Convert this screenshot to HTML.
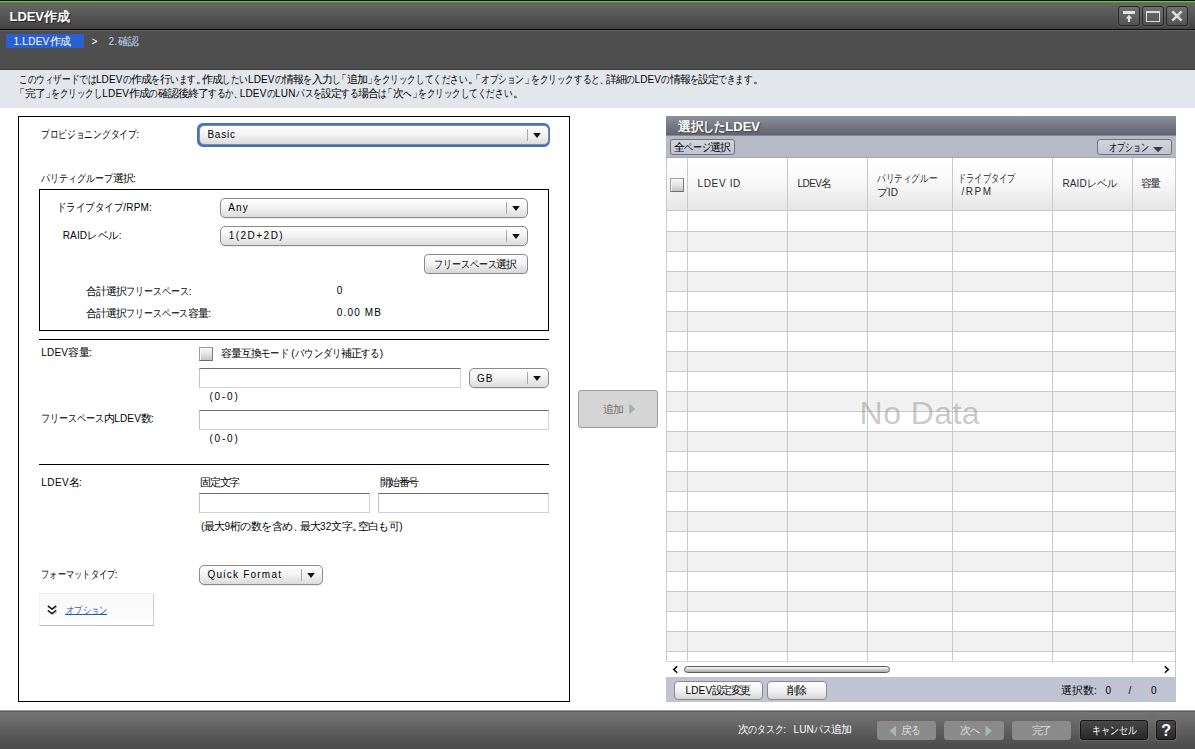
<!DOCTYPE html>
<html lang="ja"><head><meta charset="utf-8"><title>LDEV作成</title>
<style>
html,body{margin:0;padding:0;}
body{width:1195px;height:749px;position:relative;overflow:hidden;background:#fff;font-family:"Liberation Sans",sans-serif;}
.b{position:absolute;box-sizing:content-box;}
.t{position:absolute;white-space:nowrap;font-family:"Liberation Sans",sans-serif;}
.k{display:inline-block;transform-origin:0 50%;}
.j{display:inline-block;}
.pl{display:inline-block;text-indent:-4.5px;}
.pr{display:inline-block;}
</style></head><body>
<div class="b" style="left:0px;top:0px;width:1195px;height:1px;background:#000;"></div>
<div class="b" style="left:0px;top:1px;width:1195px;height:1px;background:#66d400;"></div>
<div class="b" style="left:0px;top:2px;width:1195px;height:1px;background:#568a22;"></div>
<div class="b" style="left:0px;top:3px;width:1195px;height:26px;background:linear-gradient(#676767,#424242);"></div>
<div class="b" style="left:0px;top:3px;width:1195px;height:1px;background:#5e6a52;"></div>
<div class="b" style="left:0px;top:29px;width:1195px;height:1px;background:#0a0a0a;"></div>
<div class="b" style="left:0px;top:30px;width:1195px;height:1px;background:#626262;"></div>
<div class="b" style="left:0px;top:31px;width:1195px;height:39px;background:#4e4e4e;"></div>
<div class="b" style="left:0px;top:69px;width:1195px;height:1px;background:#3c3c3c;"></div>
<div class="b" style="left:0px;top:70px;width:1195px;height:38px;background:#e3e6eb;"></div>
<div class="b" style="left:6px;top:34px;width:78px;height:14px;background:#2a5fd0;"></div>
<div class="b" style="left:1118px;top:6px;width:20px;height:18px;border:1px solid #262626;border-radius:3px;background:linear-gradient(#707070,#525252);box-shadow:0 0 0 1px rgba(110,110,110,0.35);"></div>
<div class="b" style="left:1142px;top:6px;width:20px;height:18px;border:1px solid #262626;border-radius:3px;background:linear-gradient(#707070,#525252);box-shadow:0 0 0 1px rgba(110,110,110,0.35);"></div>
<div class="b" style="left:1166px;top:6px;width:20px;height:18px;border:1px solid #262626;border-radius:3px;background:linear-gradient(#707070,#525252);box-shadow:0 0 0 1px rgba(110,110,110,0.35);"></div>
<svg class="b" style="left:1118px;top:6px" width="22" height="20" viewBox="0 0 22 20"><rect x="5" y="5" width="12" height="3" fill="#e2e2e2"/><path d="M11 8.8 L14.3 12.4 L12.1 12.4 L12.1 16 L9.9 16 L9.9 12.4 L7.7 12.4 Z" fill="#e2e2e2"/></svg>
<svg class="b" style="left:1142px;top:6px" width="22" height="20" viewBox="0 0 22 20"><path d="M4 5 H18 V16 H4 Z M5 7 V15 H17 V7 Z" fill="#dcdcdc" fill-rule="evenodd"/></svg>
<svg class="b" style="left:1166px;top:6px" width="22" height="20" viewBox="0 0 22 20"><path d="M7.2 6.2 L14.8 13.8 M14.8 6.2 L7.2 13.8" stroke="#dcdcdc" stroke-width="2.5" stroke-linecap="square"/></svg>
<div class="b" style="left:18px;top:116px;width:550px;height:584px;border:1px solid #000;background:#fff;"></div>
<div class="b" style="left:197px;top:123px;width:349px;height:20px;border:2px solid #3f72d8;border-radius:6px;background:#3f72d8;"></div>
<div class="b" style="left:199px;top:125px;width:348px;height:18px;border:1px solid #8a8a8a;border-radius:5px;background:linear-gradient(#ffffff 0%,#f4f4f4 45%,#dcdcdc 100%);box-shadow:0 1px 0 rgba(0,0,0,0.08);"></div><div class="b" style="left:527px;top:129px;width:1px;height:12px;background:#a8a8a8;"></div><svg class="b" style="left:533px;top:133px" width="8" height="5" viewBox="0 0 8 5"><path d="M0.2 0 L7.8 0 L4 5 Z" fill="#111"/></svg>
<div class="b" style="left:39px;top:189px;width:508px;height:140px;border:1px solid #000;"></div>
<div class="b" style="left:220px;top:198px;width:306px;height:18px;border:1px solid #8a8a8a;border-radius:5px;background:linear-gradient(#ffffff 0%,#f4f4f4 45%,#dcdcdc 100%);box-shadow:0 1px 0 rgba(0,0,0,0.08);"></div><div class="b" style="left:506px;top:202px;width:1px;height:12px;background:#a8a8a8;"></div><svg class="b" style="left:512px;top:206px" width="8" height="5" viewBox="0 0 8 5"><path d="M0.2 0 L7.8 0 L4 5 Z" fill="#111"/></svg>
<div class="b" style="left:220px;top:226px;width:306px;height:18px;border:1px solid #8a8a8a;border-radius:5px;background:linear-gradient(#ffffff 0%,#f4f4f4 45%,#dcdcdc 100%);box-shadow:0 1px 0 rgba(0,0,0,0.08);"></div><div class="b" style="left:506px;top:230px;width:1px;height:12px;background:#a8a8a8;"></div><svg class="b" style="left:512px;top:234px" width="8" height="5" viewBox="0 0 8 5"><path d="M0.2 0 L7.8 0 L4 5 Z" fill="#111"/></svg>
<div class="b" style="left:424px;top:254px;width:102px;height:18px;border:1px solid #8a8a8a;border-radius:4px;background:linear-gradient(#ffffff 0%,#f2f2f2 50%,#d6d6d6 100%);"></div>
<div class="b" style="left:39px;top:339px;width:510px;height:1px;background:#000;"></div>
<div class="b" style="left:199px;top:347px;width:12px;height:12px;border:1px solid #9c9c9c;border-right-color:#7a7a7a;border-bottom-color:#6c6c6c;background:linear-gradient(#f6f6f6 0%,#e6e6e6 45%,#c6c6c6 100%);box-shadow:inset 1px 1px 0 rgba(255,255,255,0.7);"></div>
<div class="b" style="left:199px;top:368px;width:260px;height:18px;border:1px solid #cfd1d9;border-top-color:#6e6e6e;border-left-color:#c0c3cf;background:#fff;"></div>
<div class="b" style="left:469px;top:368px;width:78px;height:18px;border:1px solid #8a8a8a;border-radius:5px;background:linear-gradient(#ffffff 0%,#f4f4f4 45%,#dcdcdc 100%);box-shadow:0 1px 0 rgba(0,0,0,0.08);"></div><div class="b" style="left:527px;top:372px;width:1px;height:12px;background:#a8a8a8;"></div><svg class="b" style="left:533px;top:376px" width="8" height="5" viewBox="0 0 8 5"><path d="M0.2 0 L7.8 0 L4 5 Z" fill="#111"/></svg>
<div class="b" style="left:199px;top:410px;width:348px;height:18px;border:1px solid #cfd1d9;border-top-color:#6e6e6e;border-left-color:#c0c3cf;background:#fff;"></div>
<div class="b" style="left:39px;top:464px;width:510px;height:1px;background:#000;"></div>
<div class="b" style="left:199px;top:493px;width:169px;height:18px;border:1px solid #cfd1d9;border-top-color:#6e6e6e;border-left-color:#c0c3cf;background:#fff;"></div>
<div class="b" style="left:378px;top:493px;width:169px;height:18px;border:1px solid #cfd1d9;border-top-color:#6e6e6e;border-left-color:#c0c3cf;background:#fff;"></div>
<div class="b" style="left:199px;top:565px;width:122px;height:18px;border:1px solid #8a8a8a;border-radius:5px;background:linear-gradient(#ffffff 0%,#f4f4f4 45%,#dcdcdc 100%);box-shadow:0 1px 0 rgba(0,0,0,0.08);"></div><div class="b" style="left:301px;top:569px;width:1px;height:12px;background:#a8a8a8;"></div><svg class="b" style="left:307px;top:573px" width="8" height="5" viewBox="0 0 8 5"><path d="M0.2 0 L7.8 0 L4 5 Z" fill="#111"/></svg>
<div class="b" style="left:39px;top:593px;width:113px;height:31px;border:1px solid #efefef;border-right-color:#cdcdcd;border-bottom-color:#bdbdbd;background:linear-gradient(#f9f9f9,#fefefe);"></div>
<svg class="b" style="left:46px;top:604px" width="12" height="12" viewBox="0 0 12 12"><path d="M1.8 1.8 L6 5 L10.2 1.8 M1.8 6.4 L6 9.6 L10.2 6.4" stroke="#111" stroke-width="1.45" fill="none"/><path d="M2.8 2.8 L7 6 L11.2 2.8 M2.8 7.4 L7 10.6 L11.2 7.4" stroke="rgba(0,0,0,0.18)" stroke-width="1.2" fill="none"/></svg>
<div class="b" style="left:65px;top:614px;width:42px;height:1px;background:#1a5fc0;"></div>
<div class="b" style="left:578px;top:390px;width:78px;height:36px;border:1px solid #9c9c9c;border-radius:3px;background:#d5d5d5;"></div>
<svg class="b" style="left:629px;top:403px" width="8" height="12" viewBox="0 0 8 12"><path d="M0.3 0.8 L6.3 6 L0.3 11.2 Z" fill="#9fb0ae"/></svg>
<div class="b" style="left:666px;top:116px;width:510px;height:19px;background:linear-gradient(#8d909d,#60636f);"></div>
<div class="b" style="left:666px;top:135px;width:510px;height:1px;background:#858897;"></div>
<div class="b" style="left:666px;top:136px;width:510px;height:22px;background:#b6b9c6;"></div>
<div class="b" style="left:670px;top:139px;width:63px;height:14px;border:1px solid #70727c;border-radius:3px;background:linear-gradient(#d4d6de,#c2c4ce);"></div>
<div class="b" style="left:1097px;top:139px;width:73px;height:14px;border:1px solid #70727c;border-radius:3px;background:linear-gradient(#d4d6de,#c2c4ce);"></div>
<svg class="b" style="left:1153px;top:146.5px" width="10" height="6" viewBox="0 0 10 6"><path d="M0 0 L10 0 L5 5.3 Z" fill="#3c3c3c"/></svg>
<div class="b" style="left:666px;top:157px;width:510px;height:1px;background:#a3a6b3;"></div>
<div class="b" style="left:666px;top:158px;width:510px;height:52px;background:linear-gradient(#ffffff 0%,#fafafa 40%,#e6e6e6 100%);"></div>
<div class="b" style="left:666px;top:210px;width:510px;height:1px;background:#c9c9c9;"></div>
<div class="b" style="left:666px;top:211px;width:510px;height:20px;background:#fff;box-sizing:border-box;"></div><div class="b" style="left:666px;top:231px;width:510px;height:20px;background:#f1f1f1;border-top:1px solid #c9c9c9;box-sizing:border-box;"></div><div class="b" style="left:666px;top:251px;width:510px;height:20px;background:#fff;border-top:1px solid #c9c9c9;box-sizing:border-box;"></div><div class="b" style="left:666px;top:271px;width:510px;height:20px;background:#f1f1f1;border-top:1px solid #c9c9c9;box-sizing:border-box;"></div><div class="b" style="left:666px;top:291px;width:510px;height:20px;background:#fff;border-top:1px solid #c9c9c9;box-sizing:border-box;"></div><div class="b" style="left:666px;top:311px;width:510px;height:20px;background:#f1f1f1;border-top:1px solid #c9c9c9;box-sizing:border-box;"></div><div class="b" style="left:666px;top:331px;width:510px;height:20px;background:#fff;border-top:1px solid #c9c9c9;box-sizing:border-box;"></div><div class="b" style="left:666px;top:351px;width:510px;height:20px;background:#f1f1f1;border-top:1px solid #c9c9c9;box-sizing:border-box;"></div><div class="b" style="left:666px;top:371px;width:510px;height:20px;background:#fff;border-top:1px solid #c9c9c9;box-sizing:border-box;"></div><div class="b" style="left:666px;top:391px;width:510px;height:20px;background:#f1f1f1;border-top:1px solid #c9c9c9;box-sizing:border-box;"></div><div class="b" style="left:666px;top:411px;width:510px;height:20px;background:#fff;border-top:1px solid #c9c9c9;box-sizing:border-box;"></div><div class="b" style="left:666px;top:431px;width:510px;height:20px;background:#f1f1f1;border-top:1px solid #c9c9c9;box-sizing:border-box;"></div><div class="b" style="left:666px;top:451px;width:510px;height:20px;background:#fff;border-top:1px solid #c9c9c9;box-sizing:border-box;"></div><div class="b" style="left:666px;top:471px;width:510px;height:20px;background:#f1f1f1;border-top:1px solid #c9c9c9;box-sizing:border-box;"></div><div class="b" style="left:666px;top:491px;width:510px;height:20px;background:#fff;border-top:1px solid #c9c9c9;box-sizing:border-box;"></div><div class="b" style="left:666px;top:511px;width:510px;height:20px;background:#f1f1f1;border-top:1px solid #c9c9c9;box-sizing:border-box;"></div><div class="b" style="left:666px;top:531px;width:510px;height:20px;background:#fff;border-top:1px solid #c9c9c9;box-sizing:border-box;"></div><div class="b" style="left:666px;top:551px;width:510px;height:20px;background:#f1f1f1;border-top:1px solid #c9c9c9;box-sizing:border-box;"></div><div class="b" style="left:666px;top:571px;width:510px;height:20px;background:#fff;border-top:1px solid #c9c9c9;box-sizing:border-box;"></div><div class="b" style="left:666px;top:591px;width:510px;height:20px;background:#f1f1f1;border-top:1px solid #c9c9c9;box-sizing:border-box;"></div><div class="b" style="left:666px;top:611px;width:510px;height:20px;background:#fff;border-top:1px solid #c9c9c9;box-sizing:border-box;"></div><div class="b" style="left:666px;top:631px;width:510px;height:20px;background:#f1f1f1;border-top:1px solid #c9c9c9;box-sizing:border-box;"></div><div class="b" style="left:666px;top:651px;width:510px;height:10px;background:#fff;border-top:1px solid #c9c9c9;box-sizing:border-box;"></div>
<div class="b" style="left:666px;top:158px;width:1px;height:503px;background:#c9c9c9;"></div>
<div class="b" style="left:687px;top:158px;width:1px;height:503px;background:#c9c9c9;"></div>
<div class="b" style="left:787px;top:158px;width:1px;height:503px;background:#c9c9c9;"></div>
<div class="b" style="left:867px;top:158px;width:1px;height:503px;background:#c9c9c9;"></div>
<div class="b" style="left:952px;top:158px;width:1px;height:503px;background:#c9c9c9;"></div>
<div class="b" style="left:1052px;top:158px;width:1px;height:503px;background:#c9c9c9;"></div>
<div class="b" style="left:1132px;top:158px;width:1px;height:503px;background:#c9c9c9;"></div>
<div class="b" style="left:1175px;top:158px;width:1px;height:503px;background:#c9c9c9;"></div>
<div class="b" style="left:666px;top:661px;width:510px;height:1px;background:#d8d8d8;"></div>
<div class="b" style="left:670px;top:178px;width:12px;height:12px;border:1px solid #9c9c9c;border-right-color:#7a7a7a;border-bottom-color:#6c6c6c;background:linear-gradient(#f6f6f6 0%,#e6e6e6 45%,#c6c6c6 100%);box-shadow:inset 1px 1px 0 rgba(255,255,255,0.7);"></div>
<div class="b" style="left:666px;top:662px;width:510px;height:15px;background:#fff;"></div>
<svg class="b" style="left:672px;top:665px" width="7" height="9" viewBox="0 0 7 9"><path d="M5.2 1.4 L1.7 4.6 L5.2 7.8" stroke="#000" stroke-width="1.45" fill="none"/></svg>
<svg class="b" style="left:1163px;top:665px" width="7" height="9" viewBox="0 0 7 9"><path d="M1.8 1.4 L5.3 4.6 L1.8 7.8" stroke="#000" stroke-width="1.45" fill="none"/></svg>
<div class="b" style="left:1175px;top:661px;width:1px;height:16px;background:#c9c9c9;"></div>
<div class="b" style="left:684px;top:666px;width:204px;height:5px;border:1px solid #5a5a5a;border-radius:4px;background:linear-gradient(#fafafa,#a8a8a8);"></div>
<div class="b" style="left:666px;top:677px;width:510px;height:25px;background:#c1c5d3;"></div>
<div class="b" style="left:674px;top:681px;width:87px;height:17px;border:1px solid #8a8a8a;border-radius:4px;background:linear-gradient(#ffffff 0%,#f2f2f2 50%,#d6d6d6 100%);"></div>
<div class="b" style="left:767px;top:681px;width:58px;height:17px;border:1px solid #8a8a8a;border-radius:4px;background:linear-gradient(#ffffff 0%,#f2f2f2 50%,#d6d6d6 100%);"></div>
<div class="b" style="left:0px;top:710px;width:1195px;height:39px;background:linear-gradient(#767676 0%,#6c6c6c 25%,#565656 70%,#4a4a4a 100%);"></div>
<div class="b" style="left:0px;top:710px;width:1195px;height:1px;background:#9c9c9c;"></div>
<div class="b" style="left:0px;top:711px;width:1195px;height:1px;background:#5c5c5c;"></div>
<div class="b" style="left:877px;top:721px;width:59px;height:19px;border-radius:3px;background:#8a8a8a;"></div>
<div class="b" style="left:944px;top:721px;width:60px;height:19px;border-radius:3px;background:#8a8a8a;"></div>
<div class="b" style="left:1012px;top:721px;width:59px;height:19px;border-radius:3px;background:#8a8a8a;"></div>
<svg class="b" style="left:889px;top:725px" width="8" height="12" viewBox="0 0 8 12"><path d="M7 0.5 L0.5 6 L7 11.5 Z" fill="#a9b8b6"/></svg>
<svg class="b" style="left:985px;top:725px" width="8" height="12" viewBox="0 0 8 12"><path d="M0.5 0.5 L7 6 L0.5 11.5 Z" fill="#a9b8b6"/></svg>
<div class="b" style="left:1080px;top:720px;width:66px;height:18px;border:1px solid #141414;border-radius:3px;background:linear-gradient(#484848,#282828);box-shadow:0 0 0 1px rgba(140,140,140,0.30);"></div>
<div class="b" style="left:1156px;top:720px;width:18px;height:18px;border:1px solid #141414;border-radius:3px;background:linear-gradient(#484848,#282828);box-shadow:0 0 0 1px rgba(140,140,140,0.30);"></div>
<span class="t" id="title" style="left:9.50px;top:8.50px;font-size:13px;line-height:16px;color:#fff;font-weight:bold;text-shadow:1px 1px 1px #222;"><span style="font-size:13px;letter-spacing:-0.043px">LDEV</span><span class="j" style="width:25.00px;letter-spacing:-0.50px">作成</span></span>
<span class="t" id="bc1" style="left:13.50px;top:34.00px;font-size:11px;line-height:14px;color:#fff;"><span style="font-size:10px;letter-spacing:0.254px">1.LDEV</span><span class="j" style="width:20.00px;letter-spacing:-1.00px">作成</span></span>
<span class="t" id="bcsep" style="left:91.50px;top:35.00px;font-size:10px;line-height:14px;color:#fff;">></span>
<span class="t" id="bc2" style="left:108.50px;top:34.00px;font-size:11px;line-height:14px;color:#c0d4f4;"><span style="font-size:10px;letter-spacing:0.33px">2.</span><span class="j" style="width:20.00px;letter-spacing:-1.00px">確認</span></span>
<span class="t" id="info1" style="left:18.50px;top:72.00px;font-size:11px;line-height:14px;color:#000;"><span class="k" style="width:77.42px;transform:scaleX(0.782)">このウィザードでは</span><span style="font-size:10px;letter-spacing:0.15px">LDEV</span><span class="k" style="width:8.60px;transform:scaleX(0.782)">の</span><span class="j" style="width:20.00px;letter-spacing:-1.00px">作成</span><span class="k" style="width:8.60px;transform:scaleX(0.782)">を</span><span class="j" style="width:10.00px;letter-spacing:-1.00px">行</span><span class="k" style="width:25.81px;transform:scaleX(0.782)">います</span><span class="pr" style="width:6.5px">。</span><span class="j" style="width:20.00px;letter-spacing:-1.00px">作成</span><span class="k" style="width:25.81px;transform:scaleX(0.782)">したい</span><span style="font-size:10px;letter-spacing:0.15px">LDEV</span><span class="k" style="width:8.60px;transform:scaleX(0.782)">の</span><span class="j" style="width:20.00px;letter-spacing:-1.00px">情報</span><span class="k" style="width:8.60px;transform:scaleX(0.782)">を</span><span class="j" style="width:20.00px;letter-spacing:-1.00px">入力</span><span class="k" style="width:8.60px;transform:scaleX(0.782)">し</span><span class="pl" style="width:6.5px">「</span><span class="j" style="width:20.00px;letter-spacing:-1.00px">追加</span><span class="pr" style="width:6.5px">」</span><span class="k" style="width:94.62px;transform:scaleX(0.782)">をクリックしてください</span><span class="pr" style="width:6.5px">。</span><span class="pl" style="width:6.5px">「</span><span class="k" style="width:43.01px;transform:scaleX(0.782)">オプション</span><span class="pr" style="width:6.5px">」</span><span class="k" style="width:68.82px;transform:scaleX(0.782)">をクリックすると</span><span class="pr" style="width:6.5px">、</span><span class="j" style="width:20.00px;letter-spacing:-1.00px">詳細</span><span class="k" style="width:8.60px;transform:scaleX(0.782)">の</span><span style="font-size:10px;letter-spacing:0.15px">LDEV</span><span class="k" style="width:8.60px;transform:scaleX(0.782)">の</span><span class="j" style="width:20.00px;letter-spacing:-1.00px">情報</span><span class="k" style="width:8.60px;transform:scaleX(0.782)">を</span><span class="j" style="width:20.00px;letter-spacing:-1.00px">設定</span><span class="k" style="width:34.41px;transform:scaleX(0.782)">できます</span><span class="pr" style="width:6.5px">。</span></span>
<span class="t" id="info2" style="left:18.00px;top:86.00px;font-size:11px;line-height:14px;color:#000;"><span class="pl" style="width:6.5px">「</span><span class="j" style="width:20.00px;letter-spacing:-1.00px">完了</span><span class="pr" style="width:6.5px">」</span><span class="k" style="width:51.35px;transform:scaleX(0.778)">をクリックし</span><span style="font-size:10px;letter-spacing:0.15px">LDEV</span><span class="j" style="width:20.00px;letter-spacing:-1.00px">作成</span><span class="k" style="width:8.56px;transform:scaleX(0.778)">の</span><span class="j" style="width:50.00px;letter-spacing:-1.00px">確認後終了</span><span class="k" style="width:25.67px;transform:scaleX(0.778)">するか</span><span class="pr" style="width:6.5px">、</span><span style="font-size:10px;letter-spacing:0.15px">LDEV</span><span class="k" style="width:8.56px;transform:scaleX(0.778)">の</span><span style="font-size:10px;letter-spacing:0.15px">LUN</span><span class="k" style="width:25.67px;transform:scaleX(0.778)">パスを</span><span class="j" style="width:20.00px;letter-spacing:-1.00px">設定</span><span class="k" style="width:17.12px;transform:scaleX(0.778)">する</span><span class="j" style="width:20.00px;letter-spacing:-1.00px">場合</span><span class="k" style="width:8.56px;transform:scaleX(0.778)">は</span><span class="pl" style="width:6.5px">「</span><span class="j" style="width:10.00px;letter-spacing:-1.00px">次</span><span class="k" style="width:8.56px;transform:scaleX(0.778)">へ</span><span class="pr" style="width:6.5px">」</span><span class="k" style="width:94.14px;transform:scaleX(0.778)">をクリックしてください</span><span class="pr" style="width:6.5px">。</span></span>
<span class="t" id="l_prov" style="left:40.70px;top:126.50px;font-size:11px;line-height:14px;color:#000;"><span class="k" style="width:95.59px;transform:scaleX(0.790)">プロビジョニングタイプ</span><span style="font-size:10px;letter-spacing:0.15px">:</span></span>
<span class="t" id="v_basic" style="left:207.40px;top:127.50px;font-size:10px;line-height:14px;color:#000;letter-spacing:0.761px;">Basic</span>
<span class="t" id="l_pg" style="left:41.00px;top:170.80px;font-size:11px;line-height:14px;color:#000;"><span class="k" style="width:72.07px;transform:scaleX(0.819)">パリティグループ</span><span class="j" style="width:20.00px;letter-spacing:-1.00px">選択</span><span style="font-size:10px;letter-spacing:0.15px">:</span></span>
<span class="t" id="l_drive" style="left:56.90px;top:199.80px;font-size:11px;line-height:14px;color:#000;"><span class="k" style="width:66.45px;transform:scaleX(0.863)">ドライブタイプ</span><span style="font-size:10px;letter-spacing:0.15px">/RPM:</span></span>
<span class="t" id="v_any" style="left:228.30px;top:200.80px;font-size:10px;line-height:14px;color:#000;letter-spacing:1.129px;">Any</span>
<span class="t" id="l_raid" style="left:62.70px;top:227.90px;font-size:11px;line-height:14px;color:#000;"><span style="font-size:10px;letter-spacing:0.15px">RAID</span><span class="k" style="width:31.55px;transform:scaleX(0.956)">レベル</span><span style="font-size:10px;letter-spacing:0.15px">:</span></span>
<span class="t" id="v_raid" style="left:228.70px;top:228.80px;font-size:10px;line-height:14px;color:#000;letter-spacing:1.482px;">1(2D+2D)</span>
<span class="t" id="b_free" style="left:433.50px;top:257.00px;font-size:11px;line-height:14px;color:#000;"><span class="k" style="width:62.99px;transform:scaleX(0.818)">フリースペース</span><span class="j" style="width:20.00px;letter-spacing:-1.00px">選択</span></span>
<span class="t" id="l_tot1" style="left:86.00px;top:284.00px;font-size:11px;line-height:14px;color:#000;"><span class="j" style="width:40.00px;letter-spacing:-1.00px">合計選択</span><span class="k" style="width:62.76px;transform:scaleX(0.815)">フリースペース</span><span style="font-size:10px;letter-spacing:0.15px">:</span></span>
<span class="t" id="v_tot1" style="left:336.80px;top:284.00px;font-size:10px;line-height:14px;color:#000;">0</span>
<span class="t" id="l_tot2" style="left:86.00px;top:306.40px;font-size:11px;line-height:14px;color:#000;"><span class="j" style="width:40.00px;letter-spacing:-1.00px">合計選択</span><span class="k" style="width:62.37px;transform:scaleX(0.810)">フリースペース</span><span class="j" style="width:20.00px;letter-spacing:-1.00px">容量</span><span style="font-size:10px;letter-spacing:0.15px">:</span></span>
<span class="t" id="v_tot2" style="left:336.80px;top:306.20px;font-size:10px;line-height:14px;color:#000;letter-spacing:1.159px;">0.00 MB</span>
<span class="t" id="l_cap" style="left:41.30px;top:345.30px;font-size:11px;line-height:14px;color:#000;"><span style="font-size:10px;letter-spacing:0.15px">LDEV</span><span class="j" style="width:21.04px;letter-spacing:-0.48px">容量</span><span style="font-size:10px;letter-spacing:0.15px">:</span></span>
<span class="t" id="l_compat" style="left:220.50px;top:346.00px;font-size:11px;line-height:14px;color:#000;"><span class="j" style="width:40.00px;letter-spacing:-1.00px">容量互換</span><span class="k" style="width:27.85px;transform:scaleX(0.844)">モード</span><span style="font-size:10px;letter-spacing:0.15px"> (</span><span class="k" style="width:46.42px;transform:scaleX(0.844)">バウンダリ</span><span class="j" style="width:20.00px;letter-spacing:-1.00px">補正</span><span class="k" style="width:18.57px;transform:scaleX(0.844)">する</span><span style="font-size:10px;letter-spacing:0.15px">)</span></span>
<span class="t" id="v_gb" style="left:477.00px;top:372.00px;font-size:10px;line-height:14px;color:#000;letter-spacing:1.047px;">GB</span>
<span class="t" id="r1" style="left:209.50px;top:390.00px;font-size:10px;line-height:14px;color:#000;letter-spacing:1.794px;">(0-0)</span>
<span class="t" id="l_cnt" style="left:40.90px;top:411.30px;font-size:11px;line-height:14px;color:#000;"><span class="k" style="width:63.37px;transform:scaleX(0.823)">フリースペース</span><span class="j" style="width:10.00px;letter-spacing:-1.00px">内</span><span style="font-size:10px;letter-spacing:0.15px">LDEV</span><span class="j" style="width:10.00px;letter-spacing:-1.00px">数</span><span style="font-size:10px;letter-spacing:0.15px">:</span></span>
<span class="t" id="r2" style="left:209.50px;top:432.00px;font-size:10px;line-height:14px;color:#000;letter-spacing:1.794px;">(0-0)</span>
<span class="t" id="l_name" style="left:41.30px;top:475.30px;font-size:11px;line-height:14px;color:#000;"><span style="font-size:10px;letter-spacing:0.416px">LDEV</span><span class="j" style="width:10.00px;letter-spacing:-1.00px">名</span><span style="font-size:10px;letter-spacing:0.416px">:</span></span>
<span class="t" id="l_fix" style="left:200.40px;top:475.00px;font-size:11px;line-height:14px;color:#000;"><span class="j" style="width:38.68px;letter-spacing:-1.33px">固定文字</span></span>
<span class="t" id="l_start" style="left:380.00px;top:475.00px;font-size:11px;line-height:14px;color:#000;"><span class="j" style="width:37.32px;letter-spacing:-1.67px">開始番号</span></span>
<span class="t" id="l_hint" style="left:200.90px;top:519.00px;font-size:11px;line-height:14px;color:#000;"><span style="font-size:10px;letter-spacing:0.15px">(</span><span class="j" style="width:20.14px;letter-spacing:-0.93px">最大</span><span style="font-size:10px;letter-spacing:0.15px">9</span><span class="j" style="width:10.07px;letter-spacing:-0.93px">桁</span><span class="k" style="width:11.00px;transform:scaleX(1.000)">の</span><span class="j" style="width:10.07px;letter-spacing:-0.93px">数</span><span class="k" style="width:11.00px;transform:scaleX(1.000)">を</span><span class="j" style="width:10.07px;letter-spacing:-0.93px">含</span><span class="k" style="width:11.00px;transform:scaleX(1.000)">め</span><span class="pr" style="width:6.5px">、</span><span class="j" style="width:20.14px;letter-spacing:-0.93px">最大</span><span style="font-size:10px;letter-spacing:0.15px">32</span><span class="j" style="width:20.14px;letter-spacing:-0.93px">文字</span><span class="pr" style="width:6.5px">。</span><span class="j" style="width:20.14px;letter-spacing:-0.93px">空白</span><span class="k" style="width:11.00px;transform:scaleX(1.000)">も</span><span class="j" style="width:10.07px;letter-spacing:-0.93px">可</span><span style="font-size:10px;letter-spacing:0.15px">)</span></span>
<span class="t" id="l_fmt" style="left:40.50px;top:567.10px;font-size:11px;line-height:14px;color:#000;"><span class="k" style="width:74.25px;transform:scaleX(0.750)">フォーマットタイプ</span><span style="font-size:10px;letter-spacing:0.15px">:</span></span>
<span class="t" id="v_fmt" style="left:207.40px;top:568.00px;font-size:10px;line-height:14px;color:#000;letter-spacing:1.234px;">Quick Format</span>
<span class="t" id="l_opt" style="left:65.50px;top:602.80px;font-size:11px;line-height:14px;color:#1a5fc0;text-decoration:underline;"><span class="k" style="width:41.30px;transform:scaleX(0.751)">オプション</span></span>
<span class="t" id="b_add" style="left:603.00px;top:402.00px;font-size:11px;line-height:14px;color:#707070;"><span class="j" style="width:20.00px;letter-spacing:-1.00px">追加</span></span>
<span class="t" id="r_title" style="left:678.00px;top:118.50px;font-size:13px;line-height:16px;color:#fff;font-weight:bold;text-shadow:1px 1px 1px #444;"><span class="j" style="width:25.00px;letter-spacing:-0.50px">選択</span><span class="k" style="width:22.33px;transform:scaleX(0.859)">した</span><span style="font-size:13px;letter-spacing:0px">LDEV</span></span>
<span class="t" id="b_allpg" style="left:673.50px;top:140.20px;font-size:11px;line-height:14px;color:#000;"><span class="j" style="width:10.00px;letter-spacing:-1.00px">全</span><span class="k" style="width:26.99px;transform:scaleX(0.818)">ページ</span><span class="j" style="width:20.00px;letter-spacing:-1.00px">選択</span></span>
<span class="t" id="b_ropt" style="left:1108.70px;top:140.20px;font-size:11px;line-height:14px;color:#000;"><span class="k" style="width:39.98px;transform:scaleX(0.727)">オプション</span></span>
<span class="t" id="h_id" style="left:697.50px;top:177.20px;font-size:10px;line-height:14px;color:#2a2a2a;letter-spacing:0.650px;">LDEV ID</span>
<span class="t" id="h_name" style="left:797.60px;top:176.20px;font-size:11px;line-height:14px;color:#2a2a2a;"><span style="font-size:10px;letter-spacing:-0.607px">LDEV</span><span class="j" style="width:10.00px;letter-spacing:-1.00px">名</span></span>
<span class="t" id="h_pg1" style="left:876.80px;top:170.90px;font-size:11px;line-height:14px;color:#2a2a2a;"><span class="k" style="width:60.21px;transform:scaleX(0.782)">パリティグルー</span></span>
<span class="t" id="h_pg2" style="left:876.80px;top:184.90px;font-size:11px;line-height:14px;color:#2a2a2a;"><span class="k" style="width:11.00px;transform:scaleX(1.000)">プ</span><span style="font-size:10px;letter-spacing:0.15px">ID</span></span>
<span class="t" id="h_dt1" style="left:958.00px;top:170.90px;font-size:11px;line-height:14px;color:#2a2a2a;"><span class="k" style="width:57.60px;transform:scaleX(0.748)">ドライブタイプ</span></span>
<span class="t" id="h_dt2" style="left:961.50px;top:185.40px;font-size:10px;line-height:14px;color:#2a2a2a;letter-spacing:1.499px;">/RPM</span>
<span class="t" id="h_raid" style="left:1062.40px;top:176.20px;font-size:11px;line-height:14px;color:#2a2a2a;"><span style="font-size:10px;letter-spacing:0.15px">RAID</span><span class="k" style="width:30.10px;transform:scaleX(0.912)">レベル</span></span>
<span class="t" id="h_cap" style="left:1141.20px;top:176.20px;font-size:11px;line-height:14px;color:#2a2a2a;"><span class="j" style="width:18.42px;letter-spacing:-1.79px">容量</span></span>
<span class="t" id="nodata" style="left:859.60px;top:394.00px;font-size:32px;line-height:38px;color:rgba(135,135,135,0.44);letter-spacing:0.435px;">No Data</span>
<span class="t" id="b_ldev" style="left:685.50px;top:683.20px;font-size:11px;line-height:14px;color:#000;"><span style="font-size:10px;letter-spacing:0.15px">LDEV</span><span class="j" style="width:37.04px;letter-spacing:-1.74px">設定変更</span></span>
<span class="t" id="b_del" style="left:787.00px;top:683.20px;font-size:11px;line-height:14px;color:#000;"><span class="j" style="width:18.00px;letter-spacing:-2.00px">削除</span></span>
<span class="t" id="l_sel" style="left:1061.00px;top:683.20px;font-size:11px;line-height:14px;color:#000;"><span class="j" style="width:33.06px;letter-spacing:0.02px">選択数</span><span style="font-size:10px;letter-spacing:0.15px">:</span></span>
<span class="t" id="v_sel1" style="left:1105.50px;top:684.20px;font-size:10px;line-height:14px;color:#000;">0</span>
<span class="t" id="v_slash" style="left:1128.50px;top:684.20px;font-size:10px;line-height:14px;color:#000;">/</span>
<span class="t" id="v_sel2" style="left:1151.00px;top:684.20px;font-size:10px;line-height:14px;color:#000;">0</span>
<span class="t" id="f_next" style="left:737.70px;top:722.10px;font-size:11px;line-height:14px;color:#fff;"><span class="j" style="width:10.00px;letter-spacing:-1.00px">次</span><span class="k" style="width:35.55px;transform:scaleX(0.808)">のタスク</span><span style="font-size:10px;letter-spacing:0.15px">:</span></span>
<span class="t" id="f_lun" style="left:793.50px;top:722.10px;font-size:11px;line-height:14px;color:#fff;"><span style="font-size:10px;letter-spacing:0.15px">LUN</span><span class="k" style="width:17.53px;transform:scaleX(0.797)">パス</span><span class="j" style="width:20.00px;letter-spacing:-1.00px">追加</span></span>
<span class="t" id="f_back" style="left:900.50px;top:723.20px;font-size:11px;line-height:14px;color:#dedede;"><span class="j" style="width:10.00px;letter-spacing:-1.00px">戻</span><span class="k" style="width:9.50px;transform:scaleX(0.864)">る</span></span>
<span class="t" id="f_fwd" style="left:959.50px;top:723.20px;font-size:11px;line-height:14px;color:#dedede;"><span class="j" style="width:10.00px;letter-spacing:-1.00px">次</span><span class="k" style="width:10.00px;transform:scaleX(0.909)">へ</span></span>
<span class="t" id="f_done" style="left:1031.80px;top:723.20px;font-size:11px;line-height:14px;color:#dedede;"><span class="j" style="width:18.00px;letter-spacing:-2.00px">完了</span></span>
<span class="t" id="f_cancel" style="left:1091.50px;top:722.70px;font-size:11px;line-height:14px;color:#fff;"><span class="k" style="width:44.99px;transform:scaleX(0.818)">キャンセル</span></span>
<span class="t" id="f_help" style="left:1161.20px;top:722.00px;font-size:16px;line-height:18px;color:#fff;font-weight:bold;">?</span>
</body></html>
